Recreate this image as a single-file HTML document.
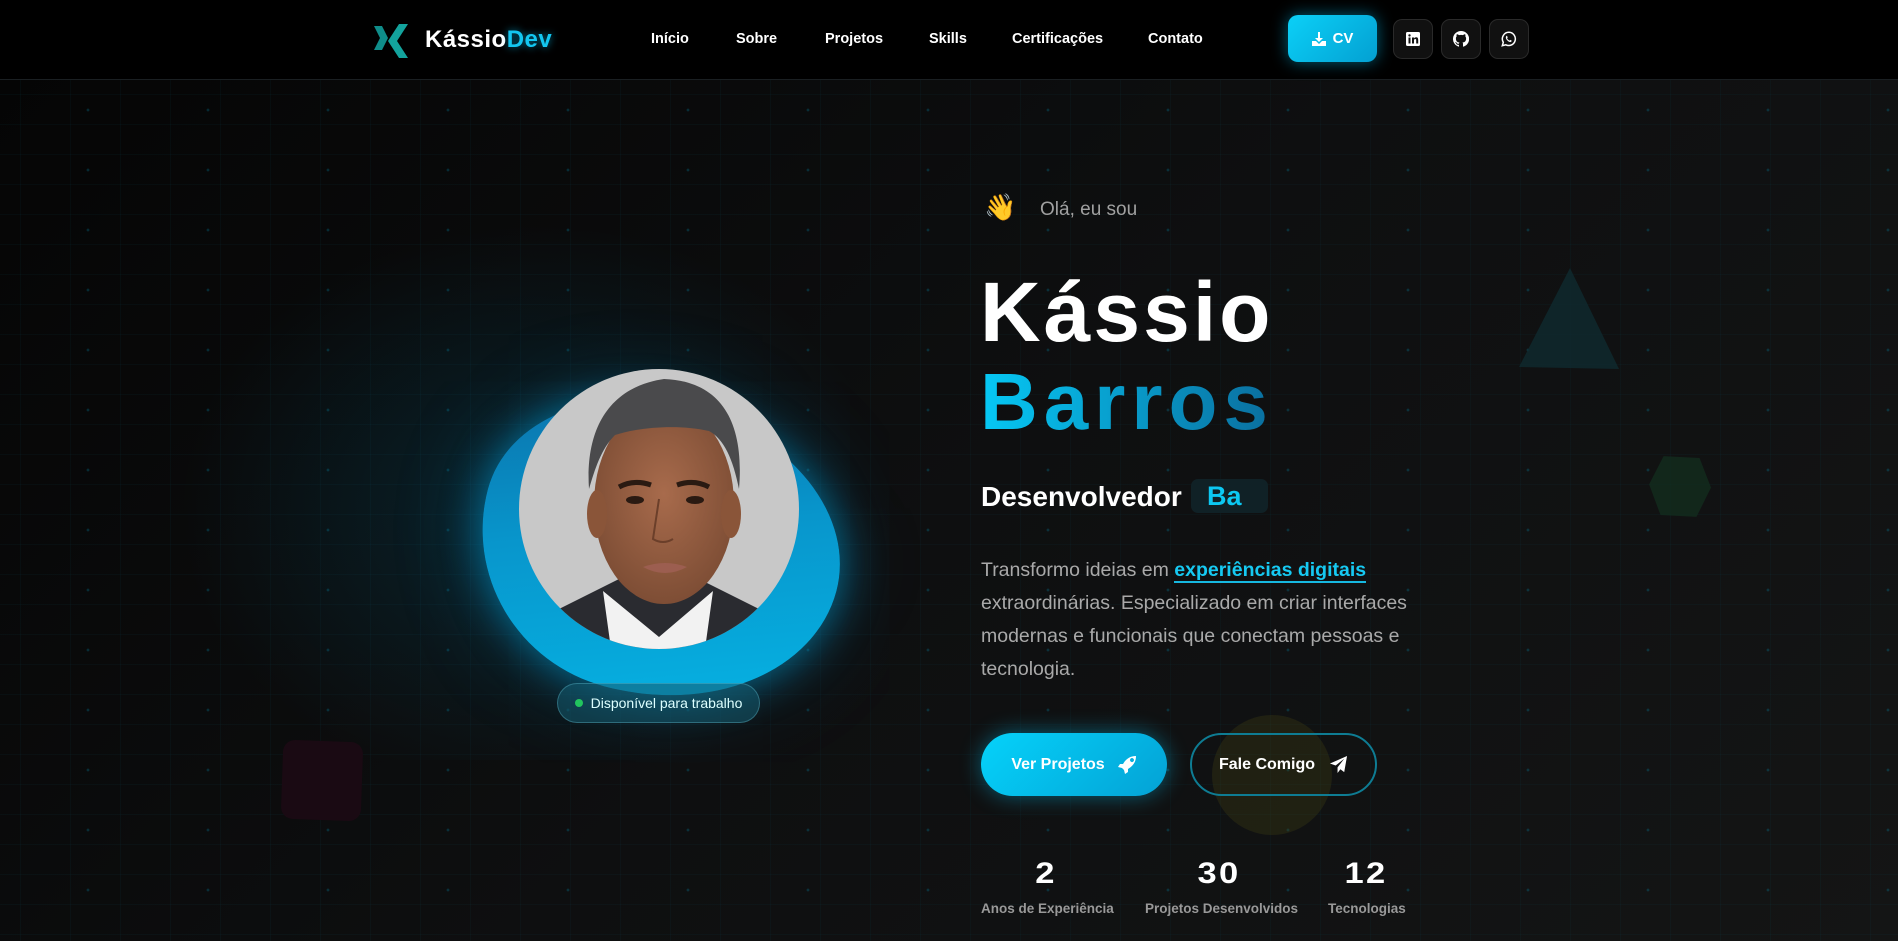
<!DOCTYPE html>
<html><head><meta charset="utf-8"><style>
*{margin:0;padding:0;box-sizing:border-box}
body{width:1898px;height:941px;overflow:hidden;background:#0b0b0b;font-family:"Liberation Sans",sans-serif;position:relative}
.bg{position:absolute;left:0;top:80px;width:1898px;height:861px;background:linear-gradient(135deg,#050505 0%,#0e0f10 50%,#141515 100%)}
.grid{position:absolute;left:0;top:80px;width:1898px;height:861px;background-image:linear-gradient(rgba(0,180,220,.035) 1px,transparent 1px),linear-gradient(90deg,rgba(0,180,220,.035) 1px,transparent 1px);background-size:50px 30px;background-position:20px 14px}
.dots{position:absolute;left:0;top:80px;width:1898px;height:861px;background-image:radial-gradient(circle,rgba(0,170,210,.22) 1.2px,transparent 1.6px);background-size:120px 60px;background-position:28px 0}
.nav{position:absolute;left:0;top:0;width:1898px;height:80px;background:#000;border-bottom:1px solid #1a1f22}
.abs{position:absolute}
.link{position:absolute;top:31px;color:#fff;font-weight:bold;font-size:14.5px}
.ib{position:absolute;top:19px;width:40px;height:40px;border-radius:9px;background:#111;border:1px solid #2a2a2a;display:flex;align-items:center;justify-content:center}
.p{position:absolute;left:981px;color:#a9a9a9;font-size:19.5px;white-space:nowrap}
.stat{position:absolute;top:857px;color:#fff;font-weight:bold;font-size:30px;text-align:center;letter-spacing:2px;transform:scaleX(1.15)}
.lab{position:absolute;top:901px;color:#999;font-weight:bold;font-size:13.5px;white-space:nowrap}
</style></head><body>
<div class="bg"></div>
<div class="abs" style="left:150px;top:200px;width:700px;height:560px;background:radial-gradient(ellipse at 55% 55%,rgba(0,120,160,.22),transparent 65%)"></div>
<div class="grid"></div><div class="dots"></div>

<div class="nav"></div>
<svg class="abs" style="left:373px;top:23px" width="36" height="36" viewBox="0 0 36 36"><path d="M1 3h8l6 12-6 12H1l6-12z" fill="#0f8d8a"/><path d="M35 1h-9L15 18l11 17h9L24 18z" fill="#13a39d"/></svg>
<div class="abs" style="left:425px;top:26px;font-size:24px;font-weight:bold;color:#fff;letter-spacing:.5px">Kássio<span style="color:#13c6f0;text-shadow:0 0 8px rgba(0,200,255,.6)">Dev</span></div>
<div class="link" style="left:651px">Início</div>
<div class="link" style="left:736px">Sobre</div>
<div class="link" style="left:825px">Projetos</div>
<div class="link" style="left:929px">Skills</div>
<div class="link" style="left:1012px">Certificações</div>
<div class="link" style="left:1148px">Contato</div>
<div class="abs" style="left:1288px;top:15px;width:89px;height:47px;border-radius:10px;background:linear-gradient(135deg,#0bd0f7,#03a0d2);box-shadow:0 0 16px rgba(0,190,240,.5);color:#fff;font-weight:bold;font-size:15px;display:flex;align-items:center;justify-content:center;gap:7px"><svg width="14" height="14" viewBox="0 0 14 14"><path d="M6 0h2v6h3L7 10 3 6h3z M0 9h4l3 3 3-3h4v5H0z" fill="#fff"/></svg>CV</div>
<div class="ib" style="left:1393px"><svg width="14" height="14" viewBox="0 0 14 14"><rect width="14" height="14" rx="1.5" fill="#fff"/><rect x="2.5" y="5.5" width="2" height="6" fill="#111"/><circle cx="3.5" cy="3.4" r="1.2" fill="#111"/><path d="M6 5.5h2v1c.5-.8 1.3-1.2 2.2-1.2 1.4 0 2 .9 2 2.6v3.6h-2V8.2c0-.8-.3-1.2-.9-1.2-.7 0-1.3.4-1.3 1.3v3.2H6z" fill="#111"/></svg></div>
<div class="ib" style="left:1441px"><svg width="16" height="16" viewBox="0 0 16 16"><path d="M8 0a8 8 0 0 0-2.5 15.6c.4 0 .5-.2.5-.4v-1.4c-2.2.5-2.7-1-2.7-1-.4-.9-.9-1.2-.9-1.2-.7-.5.1-.5.1-.5.8.1 1.2.8 1.2.8.7 1.2 1.9.9 2.300.7.1-.5.3-.9.5-1.1-1.8-.2-3.6-.9-3.6-4 0-.9.3-1.6.8-2.1-.1-.2-.4-1 .1-2.1 0 0 .7-.2 2.2.8a7.5 7.5 0 0 1 4 0c1.5-1 2.2-.8 2.2-.8.4 1.1.2 1.9.1 2.1.5.6.8 1.3.8 2.1 0 3.1-1.9 3.8-3.6 4 .3.3.5.8.5 1.5v2.2c0 .2.1.5.6.4A8 8 0 0 0 8 0z" fill="#fff"/></svg></div>
<div class="ib" style="left:1489px"><svg width="16" height="16" viewBox="0 0 16 16"><path d="M8 1.3a6.6 6.6 0 0 0-5.7 10L1.3 14.7l3.5-.9A6.6 6.6 0 1 0 8 1.3z" fill="none" stroke="#fff" stroke-width="1.5"/><path d="M5.6 4.8c.3 0 .5.1.6.4l.5 1.2-.6.8c.5 1 1.3 1.8 2.4 2.4l.7-.7 1.3.6c.2.1.2.5 0 .9-.4.6-1 .8-1.7.6-1.7-.5-3.4-2.2-3.900-3.900-.2-.8.1-1.8.7-2.3z" fill="#fff"/></svg></div>

<!-- decorative shapes -->
<svg class="abs" style="left:1515px;top:265px" width="110" height="110"><polygon points="55,3 4,102 104,104" fill="#0f2a30" opacity=".8"/></svg>
<svg class="abs" style="left:1648px;top:455px" width="66" height="66"><polygon points="14,2 50,2 63,31 50,61 14,61 1,31" fill="#123020" opacity=".7" transform="rotate(3 32 32)"/></svg>
<div class="abs" style="left:282px;top:741px;width:80px;height:79px;border-radius:12px;background:#1a0a13;transform:rotate(2deg)"></div>
<div class="abs" style="left:1212px;top:715px;width:120px;height:120px;border-radius:50%;background:rgba(70,70,20,.3)"></div>

<!-- avatar -->
<div class="abs" style="left:478px;top:404px;width:363px;height:292px;border-radius:48% 52% 55% 45% / 45% 48% 52% 55%;background:linear-gradient(160deg,#0b6da6 0%,#0896cc 45%,#05b6e6 100%);box-shadow:0 0 40px rgba(0,170,230,.55),0 0 90px rgba(0,140,200,.3);transform:rotate(15deg)"></div>
<svg class="abs" style="left:519px;top:369px" width="280" height="280" viewBox="0 0 280 280">
<defs><clipPath id="c"><circle cx="140" cy="140" r="140"/></clipPath>
<radialGradient id="sk" cx=".5" cy=".45" r=".6"><stop offset="0" stop-color="#a86b4c"/><stop offset="1" stop-color="#7a4b33"/></radialGradient></defs>
<g clip-path="url(#c)">
<rect width="280" height="280" fill="#c8c8c8"/>
<path d="M20 280 L40 240 L100 210 L180 210 L240 240 L260 280z" fill="#2a2b30"/>
<path d="M84 222 L140 268 L194 222 L186 280 L92 280z" fill="#f2f2f2"/>
<ellipse cx="145" cy="135" rx="70" ry="100" fill="url(#sk)"/>
<ellipse cx="78" cy="145" rx="10" ry="24" fill="#8a5539"/>
<ellipse cx="212" cy="145" rx="10" ry="24" fill="#8a5539"/>
<path d="M70 120 C66 60 90 18 145 10 C200 12 226 50 220 120 C214 90 205 70 190 62 C160 55 120 58 96 66 C82 80 76 100 70 120z" fill="#4a4a4c"/>
<path d="M100 118 q15 -8 32 -2 M158 116 q17 -6 32 2" stroke="#2a1a12" stroke-width="5" fill="none"/>
<ellipse cx="116" cy="131" rx="9" ry="4" fill="#2a1a12"/><ellipse cx="176" cy="131" rx="9" ry="4" fill="#2a1a12"/>
<path d="M140 130 L134 170 q10 6 20 0" stroke="#6b3f2a" stroke-width="2" fill="none"/>
<path d="M124 198 q22 -8 44 0 q-22 12 -44 0z" fill="#9c5e50"/>
</g></svg>
<div class="abs" style="left:557px;top:683px;width:203px;height:40px;border-radius:20px;background:rgba(20,90,110,.55);border:1px solid rgba(120,220,240,.3);color:#dff;font-size:14px;display:flex;align-items:center;justify-content:center;gap:8px"><span style="width:8px;height:8px;border-radius:50%;background:#22c55e;display:inline-block"></span>Disponível para trabalho</div>

<!-- right text -->
<div class="abs" style="left:984px;top:193px;font-size:26px;font-family:'Noto Color Emoji','DejaVu Sans',sans-serif">👋</div>
<div class="abs" style="left:1040px;top:199px;font-size:19px;color:#a0a0a0">Olá, eu sou</div>
<div class="abs" style="left:980px;top:262px;font-size:84px;font-weight:bold;color:#fff;letter-spacing:3px;line-height:100px">Kássio</div>
<div class="abs" style="left:980px;top:352px;font-size:80px;font-weight:bold;letter-spacing:6px;line-height:100px;background:linear-gradient(90deg,#06c8f5,#0a6e9e);-webkit-background-clip:text;color:transparent">Barros</div>
<div class="abs" style="left:981px;top:481px;font-size:28px;font-weight:bold;color:#fff">Desenvolvedor</div>
<div class="abs" style="left:1191px;top:479px;width:77px;height:34px;border-radius:7px;background:#102126;color:#0cc8f2;font-weight:bold;font-size:27px;padding-left:16px;line-height:34px">Ba</div>
<div class="p" style="top:559px">Transformo ideias em <span style="color:#16c9f2;font-weight:bold;border-bottom:2px solid #16b8e0">experiências digitais</span></div>
<div class="p" style="top:592px">extraordinárias. Especializado em criar interfaces</div>
<div class="p" style="top:625px">modernas e funcionais que conectam pessoas e</div>
<div class="p" style="top:658px">tecnologia.</div>

<div class="abs" style="left:981px;top:733px;width:186px;height:63px;border-radius:32px;background:linear-gradient(135deg,#05d2fa,#04a2d5);box-shadow:0 0 22px rgba(0,190,240,.45);color:#fff;font-weight:bold;font-size:16px;display:flex;align-items:center;justify-content:center;gap:12px">Ver Projetos <svg width="20" height="20" viewBox="0 0 20 20"><path d="M19 1C13 1 9 4 6 9L3 9 1 12l4 1 2 2 1 4 3-2 0-3c5-3 8-7 8-13zM13 5a2 2 0 1 1 0 .1z" fill="#fff"/></svg></div>
<div class="abs" style="left:1190px;top:733px;width:187px;height:63px;border-radius:32px;border:2px solid #0e7c93;color:#fff;font-weight:bold;font-size:16px;display:flex;align-items:center;justify-content:center;gap:14px">Fale Comigo <svg width="19" height="19" viewBox="0 0 20 20"><path d="M19 1L1 9l6 2 9-7-7 9v6l3-4 4 3z" fill="#fff"/></svg></div>

<div class="stat" style="left:1016px;width:60px">2</div>
<div class="stat" style="left:1179px;width:80px">30</div>
<div class="stat" style="left:1331px;width:70px">12</div>
<div class="lab" style="left:981px">Anos de Experiência</div>
<div class="lab" style="left:1145px">Projetos Desenvolvidos</div>
<div class="lab" style="left:1328px">Tecnologias</div>
</body></html>
